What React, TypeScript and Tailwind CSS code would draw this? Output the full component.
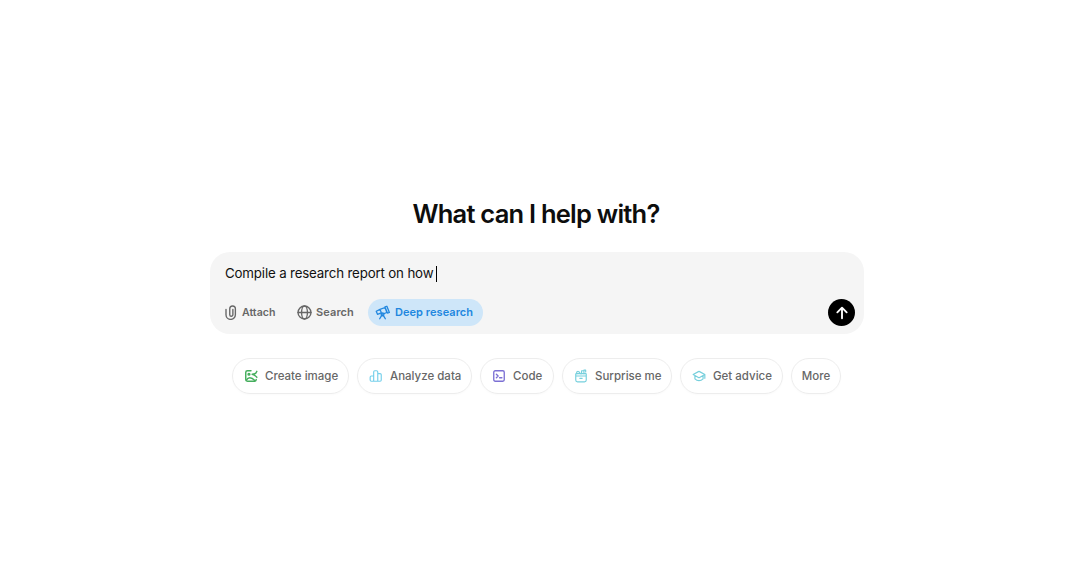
import type { ReactNode } from 'react';

function Icon({ className, viewBox = '0 0 24 24', children }: { className: string; viewBox?: string; children: ReactNode }) {
  return (
    <svg
      className={`shrink-0 ${className}`}
      viewBox={viewBox}
      fill="none"
      stroke="currentColor"
      strokeWidth="2"
      strokeLinecap="round"
      strokeLinejoin="round"
    >
      {children}
    </svg>
  );
}

const suggestions = [
  {
    label: 'Create image',
    width: 'w-[117px]',
    color: 'text-[#45ae5d] stroke-[2.5]',
    icon: (
      <>
        <path d="M12 3H6a3 3 0 0 0-3 3v12a3 3 0 0 0 3 3h12a3 3 0 0 0 3-3" />
        <path d="M4 19c3-5 8-6 15 1" />
        <circle cx="8.5" cy="9" r="1.5" />
        <path d="M22 4c-1 4-4 5-8 5 4 1 6 3 8 5" />
      </>
    ),
  },
  {
    label: 'Analyze data',
    width: 'w-[115px]',
    color: 'text-[#76d0eb]',
    icon: (
      <path d="M8 21H4a2 2 0 0 1-2-2v-5a2 2 0 0 1 2-2h4zM8 21V5a2 2 0 0 1 2-2h3a2 2 0 0 1 2 2v16zM15 8h4a2 2 0 0 1 2 2v9a2 2 0 0 1-2 2h-4" />
    ),
  },
  {
    label: 'Code',
    width: 'w-[74px]',
    color: 'text-[#7c70d4] stroke-[2.3]',
    icon: (
      <>
        <rect x="3" y="3" width="18" height="18" rx="2.5" />
        <path d="m7.5 9 3 3-3 3M13 15h4" />
      </>
    ),
  },
  {
    label: 'Surprise me',
    width: 'w-[110px]',
    color: 'text-[#76d0dd]',
    icon: (
      <>
        <path d="M3 12v7a3 3 0 0 0 3 3h12a3 3 0 0 0 3-3v-7M4 8h16a1 1 0 0 1 1 1v3H3V9a1 1 0 0 1 1-1M10 16h4" />
        <path d="M5 8C3 4 8 2 11 8M13 8V3h4v5M17 2h3v3" />
      </>
    ),
  },
  {
    label: 'Get advice',
    width: 'w-[103px]',
    color: 'text-[#76cfdc]',
    icon: (
      <path d="M11 4.5a2 2 0 0 1 2 0l9 5-9 5a2 2 0 0 1-2 0l-9-5zM5 11.5V17c4 4 10 4 14 0v-5.5M22 9.5V16" />
    ),
  },
];

export default function App() {
  return (
    <main className="flex h-screen flex-col items-center bg-white pt-[197px] pr-px font-[Inter,sans-serif]">
      <h1 className="h-[55px] pl-[2px] text-[25.5px] leading-[34px] font-semibold tracking-[-0.77px] whitespace-nowrap text-[#0d0d0d]">
        What can I help with?
      </h1>

      <section className="ml-1 flex h-[82px] w-[654px] flex-col justify-between rounded-[20px] bg-[#f5f5f5] pt-3 pr-[9px] pb-2 pl-[15px]">
        <div className="flex h-[19px] items-center text-[13.3px] tracking-[-0.16px] whitespace-nowrap text-[#111]">
          Compile a research report on how
          <span className="ml-[3px] h-4 w-px bg-black" />
        </div>

        <div className="flex h-[27px] items-center text-[11px] font-semibold text-[#676767]">
          <button className="flex w-[72px] items-center gap-1">
            <Icon className="-ml-px h-[15px] w-[14px] stroke-[2.2]" viewBox="0 0 20 24">
              <path d="M2 7v8.5a7.5 7.5 0 0 0 15 0V6a4.5 4.5 0 0 0-9 0v9.5a2.5 2.5 0 0 0 5 0V7" />
            </Icon>
            <span className="text-[10.6px]">Attach</span>
          </button>
          <button className="flex w-[71px] items-center gap-1">
            <Icon className="size-[15px]" viewBox="1 1 22 22">
              <circle cx="12" cy="12" r="9.5" />
              <ellipse cx="12" cy="12" rx="4.3" ry="9.5" />
              <path d="M2.5 12h19" />
            </Icon>
            <span className="tracking-[0.1px]">Search</span>
          </button>
          <button className="flex h-[27px] w-[115px] items-center gap-[5px] rounded-full bg-[#cee6f9] pl-[7px] whitespace-nowrap text-[#2187df]">
            <Icon className="size-[15px] stroke-[2.1]">
              <path d="m16 3 3-1 4 10-3 1zM8 7l8-3 3 8-8 3M8 7l2 5M8 7 2 10l2 5 5-2" />
              <circle cx="12" cy="15" r="2.2" />
              <path d="m10.5 17-3 5M13.5 17l3 5" />
            </Icon>
            <span className="tracking-[0.05px]">Deep research</span>
          </button>
          <button className="ml-auto flex size-[27px] items-center justify-center rounded-full bg-black text-white">
            <Icon className="size-4 stroke-[2.8]">
              <path d="M12 20V4.5M5 11l7-7 7 7" />
            </Icon>
          </button>
        </div>
      </section>

      <div className="mt-6 ml-[3px] flex gap-2 text-[11.5px] font-medium text-[#676767]">
        {suggestions.map((item) => (
          <button
            key={item.label}
            className={`flex h-9 shrink-0 items-center gap-[7px] rounded-full border border-[#ededed] pl-[11px] whitespace-nowrap shadow-[0_1px_2px_rgba(0,0,0,0.02)] ${item.width}`}
          >
            <Icon className={`size-[14px] ${item.color}`}>{item.icon}</Icon>
            <span className="pt-0.5">{item.label}</span>
          </button>
        ))}
        <button className="h-9 w-[50px] rounded-full border border-[#ededed] pt-0.5 text-center shadow-[0_1px_2px_rgba(0,0,0,0.02)]">
          More
        </button>
      </div>
    </main>
  );
}
